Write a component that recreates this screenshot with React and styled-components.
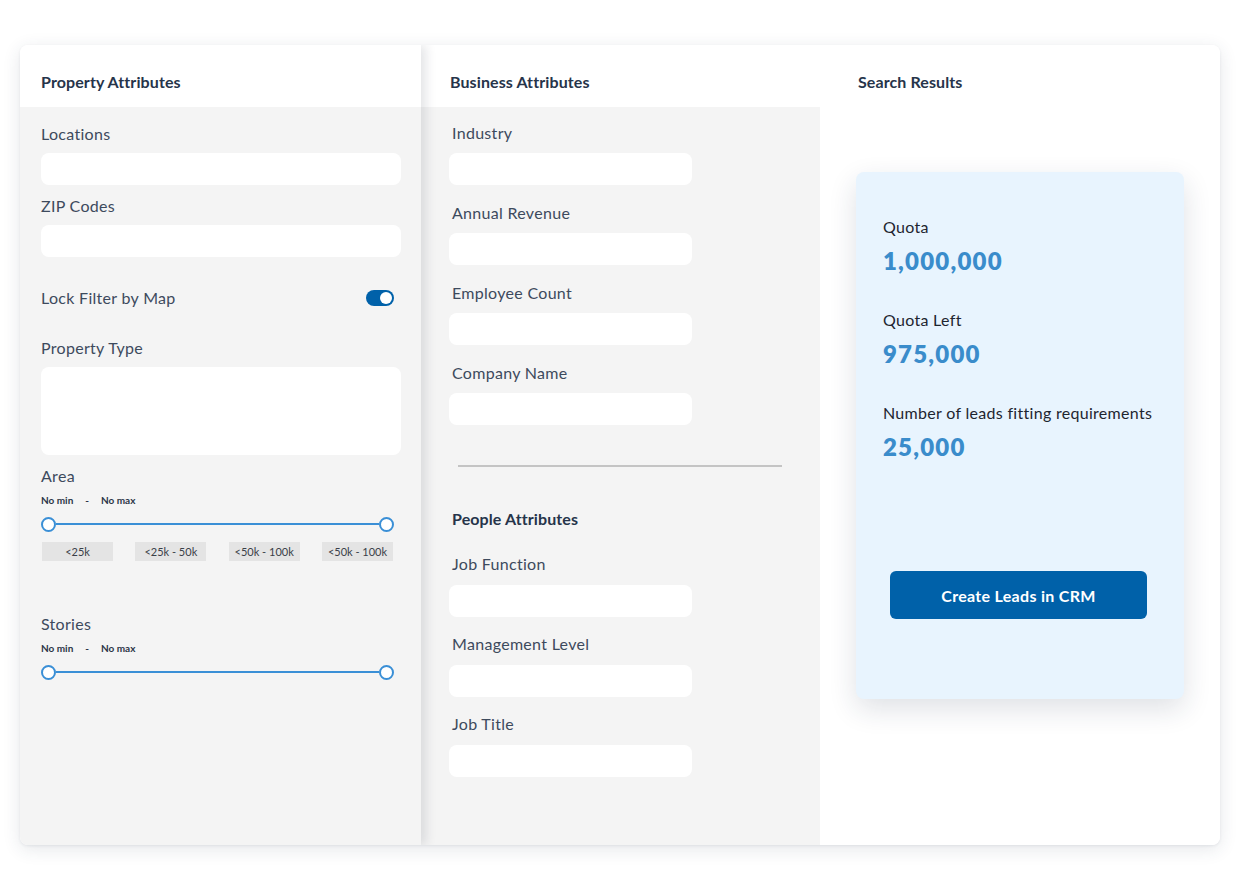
import React from 'react';
import styled, { createGlobalStyle } from 'styled-components';

const GlobalStyle = createGlobalStyle`
  body {
    margin: 0;
    background: #ffffff;
    font-family: Lato, "Noto Sans", "Liberation Sans", sans-serif;
    color: #3a4658;
  }
`;

const Page = styled.div`
  padding: 45px 0 0 20px;
  width: 1241px;
  height: 889px;
  box-sizing: border-box;
`;

const Board = styled.div`
  width: 1200px;
  height: 800px;
  display: grid;
  grid-template-columns: 401px 399px 400px;
  border-radius: 8px;
  overflow: hidden;
  background: #fff;
  box-shadow: 0 4px 18px rgba(40, 55, 80, 0.12), 0 1px 3px rgba(40, 55, 80, 0.08);
`;

const Column = styled.div`
  display: flex;
  flex-direction: column;
  position: relative;
  z-index: ${p => (p.$raised ? 2 : 1)};
  box-shadow: ${p => (p.$raised ? '5px 0 10px rgba(30, 40, 60, 0.12)' : 'none')};
`;

const Header = styled.div`
  height: 62px;
  box-sizing: border-box;
  padding: 27px 0 0 ${p => p.$pad}px;
  background: #fff;
  font-size: 16px;
  line-height: 20px;
  font-weight: 700;
  letter-spacing: 0.1px;
  color: #26344a;
`;

const Body = styled.div`
  flex: 1;
  background: ${p => (p.$white ? '#fff' : '#f4f4f4')};
  padding: ${p => p.$pad};
  display: flex;
  flex-direction: column;
`;

const Label = styled.div`
  font-size: 16px;
  line-height: 20px;
  letter-spacing: 0.3px;
  color: #3d4a5d;
  margin-top: ${p => p.$top || 0}px;
  padding-left: ${p => p.$indent || 0}px;
`;

const SubTitle = styled(Label)`
  font-weight: 700;
  letter-spacing: 0.1px;
  color: #26344a;
`;

const Input = styled.div`
  height: ${p => p.$h || 32}px;
  width: ${p => (p.$w ? `${p.$w}px` : 'auto')};
  background: #fff;
  border-radius: 8px;
  margin-top: ${p => p.$top || 9}px;
`;

const ToggleRow = styled.div`
  display: flex;
  align-items: center;
  justify-content: space-between;
  margin-top: 31px;
  padding-right: 7px;
`;

const Toggle = styled.div`
  width: 28px;
  height: 16px;
  border-radius: 8px;
  background: #0061a9;
  display: flex;
  align-items: center;
  justify-content: flex-end;
  padding: 0 2px;
  box-sizing: border-box;

  &::after {
    content: '';
    width: 12px;
    height: 12px;
    border-radius: 50%;
    background: #fff;
  }
`;

const Range = styled.div`
  margin-top: 7px;
  font-size: 10px;
  line-height: 14px;
  font-weight: 700;
  color: #2b3547;
  display: flex;
  gap: 12px;
`;

const Slider = styled.div`
  width: 353px;
  height: 16px;
  margin-top: 9px;
  display: flex;
  align-items: center;
`;

const Thumb = styled.div`
  width: 15px;
  height: 15px;
  box-sizing: border-box;
  border: 2px solid #3a8fd6;
  border-radius: 50%;
  background: #fff;
  flex: none;
`;

const Track = styled.div`
  flex: 1;
  height: 2px;
  background: #3a8fd6;
`;

const Chips = styled.div`
  width: 351px;
  margin: 10px 0 0 1px;
  display: flex;
  justify-content: space-between;
`;

const Chip = styled.div`
  width: 71px;
  height: 19px;
  background: #e4e4e4;
  font-size: 11px;
  line-height: 19px;
  text-align: center;
  color: #3a3f48;
`;

const Divider = styled.div`
  height: 2px;
  background: #c4c4c4;
  margin: 40px 38px 0 9px;
`;

const ResultCard = styled.div`
  width: 328px;
  height: 527px;
  box-sizing: border-box;
  margin: 65px 0 0 -2px;
  padding: 45px 27px 0;
  background: #e8f4fe;
  border-radius: 8px;
  box-shadow: 0 10px 28px rgba(30, 45, 70, 0.14);
  display: flex;
  flex-direction: column;
`;

const StatLabel = styled.div`
  font-size: 16px;
  line-height: 20px;
  letter-spacing: 0.3px;
  color: #1e2530;
  margin-top: ${p => p.$top || 0}px;
`;

const StatValue = styled.div`
  font-size: 24px;
  line-height: 28px;
  font-weight: 800;
  color: #3a8ccb;
  margin-top: 10px;
  letter-spacing: 1.2px;
`;

const Button = styled.button`
  margin: 110px 0 0 7px;
  width: 257px;
  height: 48px;
  border: none;
  border-radius: 6px;
  background: #0061a9;
  color: #fff;
  font-family: inherit;
  font-size: 16px;
  letter-spacing: 0.3px;
  font-weight: 700;
  cursor: pointer;
`;

const RangeSlider = () => (
  <>
    <Range>
      <span>No min</span>
      <span>-</span>
      <span>No max</span>
    </Range>
    <Slider>
      <Thumb />
      <Track />
      <Thumb />
    </Slider>
  </>
);

const businessFields = ['Industry', 'Annual Revenue', 'Employee Count', 'Company Name'];
const peopleFields = ['Job Function', 'Management Level', 'Job Title'];

export default function App() {
  return (
    <>
      <GlobalStyle />
      <Page>
        <Board>
          <Column $raised>
            <Header $pad={21}>Property Attributes</Header>
            <Body $pad="17px 20px 0 21px">
              <Label>Locations</Label>
              <Input />
              <Label $top={11}>ZIP Codes</Label>
              <Input />
              <ToggleRow>
                <Label>Lock Filter by Map</Label>
                <Toggle />
              </ToggleRow>
              <Label $top={30}>Property Type</Label>
              <Input $h={88} />
              <Label $top={11}>Area</Label>
              <RangeSlider />
              <Chips>
                <Chip>&lt;25k</Chip>
                <Chip>&lt;25k - 50k</Chip>
                <Chip>&lt;50k - 100k</Chip>
                <Chip>&lt;50k - 100k</Chip>
              </Chips>
              <Label $top={53}>Stories</Label>
              <RangeSlider />
            </Body>
          </Column>

          <Column>
            <Header $pad={29}>Business Attributes</Header>
            <Body $pad="16px 0 0 28px">
              {businessFields.map((f, i) => (
                <React.Fragment key={f}>
                  <Label $indent={3} $top={i ? 18 : 0}>{f}</Label>
                  <Input $w={243} $top={10} />
                </React.Fragment>
              ))}
              <Divider />
              <SubTitle $indent={3} $top={42}>People Attributes</SubTitle>
              {peopleFields.map((f, i) => (
                <React.Fragment key={f}>
                  <Label $indent={3} $top={i ? 17 : 25}>{f}</Label>
                  <Input $w={243} $top={11} />
                </React.Fragment>
              ))}
            </Body>
          </Column>

          <Column>
            <Header $pad={38}>Search Results</Header>
            <Body $white $pad="0 0 0 38px">
              <ResultCard>
                <StatLabel>Quota</StatLabel>
                <StatValue>1,000,000</StatValue>
                <StatLabel $top={35}>Quota Left</StatLabel>
                <StatValue>975,000</StatValue>
                <StatLabel $top={35}>Number of leads fitting requirements</StatLabel>
                <StatValue>25,000</StatValue>
                <Button>Create Leads in CRM</Button>
              </ResultCard>
            </Body>
          </Column>
        </Board>
      </Page>
    </>
  );
}
